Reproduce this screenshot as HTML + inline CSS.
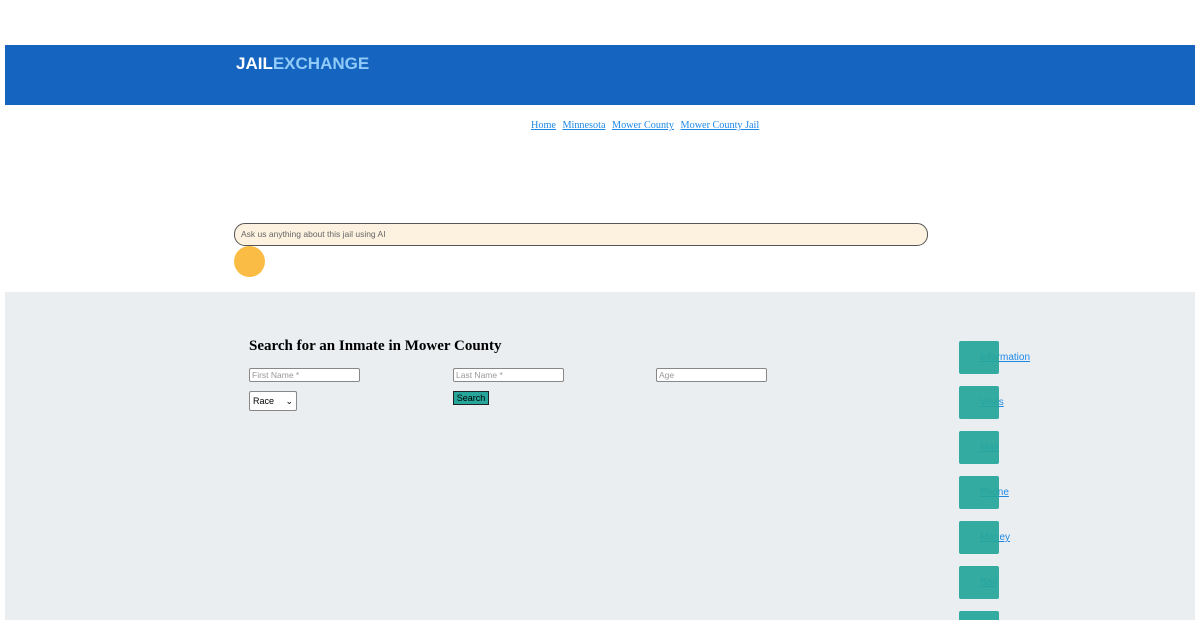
<!DOCTYPE html>
<html><head><meta charset="utf-8"><style>
html,body{margin:0;width:1200px;height:620px;overflow:hidden}
body{background:#fff;font-family:"Liberation Serif",serif;position:relative}
.hdr{position:absolute;left:5px;top:45px;width:1190px;height:60px;background:#1565c0}
.logo{position:absolute;left:236px;top:54px;font-family:"Liberation Sans",sans-serif;font-weight:bold;font-size:17px;color:#fff;letter-spacing:0}
.logo span{color:#90caf9}
.bc{position:absolute;top:120px;left:531px;font-size:10.2px}
.bc a{color:#1e88e5;text-decoration:underline;margin-right:4px}
.ai{position:absolute;left:234px;top:223px;width:686px;height:21px;border:1px solid #555;border-radius:11px;background:#fdf2e0;font-family:"Liberation Sans",sans-serif;font-size:8.5px;color:#666;line-height:21px;padding-left:6px}
.dot{position:absolute;left:234px;top:246px;width:31px;height:31px;border-radius:50%;background:#fbbc45}
.sec{position:absolute;left:5px;top:292px;width:1190px;height:328px;background:#eaeef1}
h2{position:absolute;left:249px;top:338px;margin:0;font-size:15px;font-weight:bold}
.in{position:absolute;width:107px;height:12px;border:1px solid #888;border-radius:2px;background:#fff;font-family:"Liberation Sans",sans-serif;font-size:8.5px;color:#999;line-height:12px;padding-left:2px}
.sel{position:absolute;left:249px;top:391px;width:43px;height:18px;border:1px solid #888;border-radius:2px;background:#fff;font-family:"Liberation Sans",sans-serif;font-size:9px;line-height:18px;padding-left:3px}
.btn{position:absolute;left:453px;top:391px;width:34px;height:12px;background:#26a69a;border:1px solid #222;font-family:"Liberation Sans",sans-serif;font-size:9px;text-align:center;line-height:12px}
.sq{position:absolute;left:959px;width:40px;height:33px;background:#26a69a;border-radius:2px;opacity:.93}
.lk{position:absolute;left:980px;font-family:"Liberation Sans",sans-serif;font-size:10px;color:#1e88e5;text-decoration:underline}
</style></head><body>
<div class="hdr"></div>
<div class="logo">JAIL<span>EXCHANGE</span></div>
<div class="bc"><a>Home</a> <a>Minnesota</a> <a>Mower County</a> <a>Mower County Jail</a></div>
<div class="ai">Ask us anything about this jail using AI</div>
<div class="dot"></div>
<div class="sec"></div>
<h2>Search for an Inmate in Mower County</h2>
<div class="in" style="left:249px;top:368px">First Name *</div>
<div class="in" style="left:453px;top:368px">Last Name *</div>
<div class="in" style="left:656px;top:368px">Age</div>
<div class="sel">Race <span style="float:right;margin-right:3px">⌄</span></div>
<div class="btn">Search</div>
<span class="lk" style="top:352px">Information</span><div class="sq" style="top:341px"></div>
<span class="lk" style="top:397px">Visits</span><div class="sq" style="top:386px"></div>
<span class="lk" style="top:442px">Mail</span><div class="sq" style="top:431px"></div>
<span class="lk" style="top:487px">Phone</span><div class="sq" style="top:476px"></div>
<span class="lk" style="top:532px">Money</span><div class="sq" style="top:521px"></div>
<span class="lk" style="top:577px">Bail</span><div class="sq" style="top:566px"></div>
<div class="sq" style="top:611px"></div>
</body></html>
